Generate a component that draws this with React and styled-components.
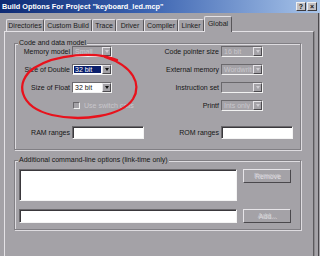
import React from "react";
import styled, { createGlobalStyle } from "styled-components";

const GlobalStyle = createGlobalStyle`
  html, body {
    margin: 0;
    padding: 0;
    background: #a4a2a7;
  }
  body {
    font-family: "Liberation Sans", Arial, sans-serif;
    font-size: 7px;
    color: #161616;
  }
`;

const Dialog = styled.div`
  position: relative;
  width: 320px;
  height: 256px;
  overflow: hidden;
  background: #a4a2a7;
  display: flex;
  flex-direction: column;
  box-shadow: inset -1px 0 0 #a4a2a7, inset -2px 0 0 #4a484c;
`;

const TitleBar = styled.div`
  height: 13px;
  flex: none;
  background: linear-gradient(to right, #0e2a74 0%, #3a62b0 45%, #a9c5ea 100%);
  display: flex;
  align-items: center;
  justify-content: space-between;
  padding: 0 3px 0 2px;
`;

const Title = styled.span`
  color: #ffffff;
  font-weight: bold;
  font-size: 7.3px;
  line-height: 13px;
  white-space: nowrap;
`;

const Caps = styled.div`
  display: flex;
  gap: 1px;
`;

const CapButton = styled.div`
  width: 10px;
  height: 9px;
  box-sizing: border-box;
  background: #c2c0c4;
  border: 1px solid;
  border-color: #f0f0f0 #3c3a3e #3c3a3e #f0f0f0;
  font-size: 7px;
  font-weight: bold;
  line-height: 7px;
  text-align: center;
  color: #101010;
`;

const TabRow = styled.div`
  display: flex;
  align-items: flex-end;
  height: 15px;
  margin-top: 3px;
  padding-left: 6px;
  flex: none;
`;

const Tab = styled.div`
  width: ${({ w }) => w}px;
  height: ${({ active }) => (active ? 16 : 12)}px;
  margin-bottom: ${({ active }) => (active ? -1 : 0)}px;
  box-sizing: border-box;
  position: relative;
  z-index: ${({ active }) => (active ? 1 : 0)};
  background: #a4a2a7;
  border: 1px solid;
  border-bottom: none;
  border-color: #e4e2e6 #58565a #58565a #e4e2e6;
  border-radius: 2px 2px 0 0;
  text-align: center;
  line-height: ${({ active }) => (active ? 13 : 11)}px;
  color: #1c1c1c;
  white-space: nowrap;
`;

const Page = styled.div`
  flex: 1;
  margin: 0 6px -4px 4px;
  border: 1px solid;
  border-color: #e4e2e6 #5c5a5e #5c5a5e #e4e2e6;
  box-shadow: 1px 0 0 #8a888c;
  padding: 11px 12px 0 9px;
  display: flex;
  flex-direction: column;
  gap: 10px;
`;

const GroupBox = styled.div`
  border: 1px solid #817f84;
  box-shadow: 1px 1px 0 #dedce0, inset 1px 1px 0 #dedce0;
  display: flex;
  flex-direction: column;
`;

const Legend = styled.div`
  align-self: flex-start;
  height: 8px;
  line-height: 8px;
  margin: -5px 0 -3px 3px;
  padding: 0 1px;
  background: #a4a2a7;
  color: #161616;
  white-space: nowrap;
`;

const FormGrid = styled.div`
  display: grid;
  grid-template-columns: 56px 72px 77px 72px;
  grid-template-rows: 11px 11px 11px 11px 21px;
  row-gap: 7px;
  padding: 2px 0 10px 1px;
`;

const Label = styled.div`
  text-align: right;
  padding-right: 2px;
  line-height: ${({ tall }) => (tall ? 13 : 11)}px;
  align-self: ${({ tall }) => (tall ? "end" : "stretch")};
  white-space: nowrap;
  color: #161616;
`;

const Cell = styled.div`
  display: flex;
  align-items: ${({ bottom }) => (bottom ? "flex-end" : "center")};
`;

const Combo = styled.div`
  width: ${({ w }) => w}px;
  height: 11px;
  box-sizing: border-box;
  display: flex;
  border: 1px solid;
  border-color: #6a686c #f2f2f2 #f2f2f2 #6a686c;
  background: ${({ disabled }) => (disabled ? "#a4a2a7" : "#ffffff")};
`;

const ComboText = styled.div`
  flex: 1;
  margin: 1px;
  padding-left: 1px;
  line-height: 7px;
  white-space: nowrap;
  overflow: hidden;
  background: ${({ selected }) => (selected ? "#0b1f6c" : "transparent")};
  color: ${({ selected, disabled }) =>
    selected ? "#ffffff" : disabled ? "#c9c7cc" : "#161616"};
`;

const DropButton = styled.div`
  width: 9px;
  flex: none;
  box-sizing: border-box;
  background: #a4a2a7;
  border: 1px solid;
  border-color: #e8e6ea #4c4a4e #4c4a4e #e8e6ea;
  display: flex;
  align-items: center;
  justify-content: center;
`;

const Arrow = styled.div`
  width: 0;
  height: 0;
  border-left: 2.5px solid transparent;
  border-right: 2.5px solid transparent;
  border-top: 3px solid ${({ disabled }) => (disabled ? "#cfcdd2" : "#101010")};
`;

const CheckLine = styled.div`
  display: flex;
  align-items: center;
  gap: 4px;
  padding-left: 1px;
  color: #c9c7cc;
  white-space: nowrap;
`;

const CheckBox = styled.div`
  width: 7px;
  height: 7px;
  box-sizing: border-box;
  border: 1px solid;
  border-color: #6a686c #f2f2f2 #f2f2f2 #6a686c;
  background: #a4a2a7;
`;

const TextField = styled.div`
  width: ${({ w }) => w}px;
  height: ${({ h }) => h}px;
  box-sizing: border-box;
  background: #ffffff;
  border: 1px solid;
  border-color: #6a686c #f4f4f4 #f4f4f4 #6a686c;
  box-shadow: inset 1px 1px 0 #3a383c;
`;

const CmdArea = styled.div`
  display: flex;
  gap: 6px;
  padding: 8px 0 6px 4px;
`;

const FieldColumn = styled.div`
  display: flex;
  flex-direction: column;
  gap: 8px;
`;

const ButtonColumn = styled.div`
  display: flex;
  flex-direction: column;
  justify-content: space-between;
`;

const PushButton = styled.div`
  width: 48px;
  height: 14px;
  box-sizing: border-box;
  border: 1px solid;
  border-color: #e6e4e8 #4a484c #4a484c #e6e4e8;
  text-align: center;
  line-height: 12px;
  color: #c8c6cb;
  text-shadow: 1px 1px 0 #e2e0e4;
`;

const Annotation = styled.svg`
  position: absolute;
  left: 0;
  top: 0;
  pointer-events: none;
`;

const ComboBox = ({ w, value, disabled, selected }) => (
  <Combo w={w} disabled={disabled}>
    <ComboText selected={selected} disabled={disabled}>
      {value}
    </ComboText>
    <DropButton>
      <Arrow disabled={disabled} />
    </DropButton>
  </Combo>
);

const tabs = [
  { name: "Directories", w: 38 },
  { name: "Custom Build", w: 48 },
  { name: "Trace", w: 24 },
  { name: "Driver", w: 28 },
  { name: "Compiler", w: 34 },
  { name: "Linker", w: 26 },
  { name: "Global", w: 28, active: true },
];

export default function App() {
  return (
    <>
      <GlobalStyle />
      <Dialog>
        <TitleBar>
          <Title>Build Options For Project "keyboard_led.mcp"</Title>
          <Caps>
            <CapButton>?</CapButton>
            <CapButton>×</CapButton>
          </Caps>
        </TitleBar>
        <TabRow>
          {tabs.map((t) => (
            <Tab key={t.name} w={t.w} active={t.active}>
              {t.name}
            </Tab>
          ))}
        </TabRow>
        <Page>
          <GroupBox>
            <Legend>Code and data model</Legend>
            <FormGrid>
              <Label>Memory model</Label>
              <Cell>
                <ComboBox w={40} value="Small" disabled />
              </Cell>
              <Label>Code pointer size</Label>
              <Cell>
                <ComboBox w={42} value="16 bit" disabled />
              </Cell>

              <Label>Size of Double</Label>
              <Cell>
                <ComboBox w={40} value="32 bit" selected />
              </Cell>
              <Label>External memory</Label>
              <Cell>
                <ComboBox w={42} value="Wordwrite" disabled />
              </Cell>

              <Label>Size of Float</Label>
              <Cell>
                <ComboBox w={40} value="32 bit" />
              </Cell>
              <Label>Instruction set</Label>
              <Cell>
                <ComboBox w={42} value="" disabled />
              </Cell>

              <Label />
              <Cell>
                <CheckLine>
                  <CheckBox />
                  Use switch calls
                </CheckLine>
              </Cell>
              <Label>Printf</Label>
              <Cell>
                <ComboBox w={42} value="Ints only" disabled />
              </Cell>

              <Label tall>RAM ranges</Label>
              <Cell bottom>
                <TextField w={72} h={13} />
              </Cell>
              <Label tall>ROM ranges</Label>
              <Cell bottom>
                <TextField w={72} h={13} />
              </Cell>
            </FormGrid>
          </GroupBox>

          <GroupBox>
            <Legend>Additional command-line options (link-time only)</Legend>
            <CmdArea>
              <FieldColumn>
                <TextField w={218} h={32} />
                <TextField w={218} h={14} />
              </FieldColumn>
              <ButtonColumn>
                <PushButton>Remove</PushButton>
                <PushButton>Add...</PushButton>
              </ButtonColumn>
            </CmdArea>
          </GroupBox>
        </Page>

        <Annotation width="320" height="256" viewBox="0 0 320 256">
          <path
            d="M117 60 C 96 51, 56 54, 34 68 C 14 82, 19 107, 52 115 C 82 122, 122 116, 133 99 C 142 84, 133 66, 105 57"
            fill="none"
            stroke="#e8121c"
            strokeWidth="2.3"
            strokeLinecap="round"
          />
        </Annotation>
      </Dialog>
    </>
  );
}
